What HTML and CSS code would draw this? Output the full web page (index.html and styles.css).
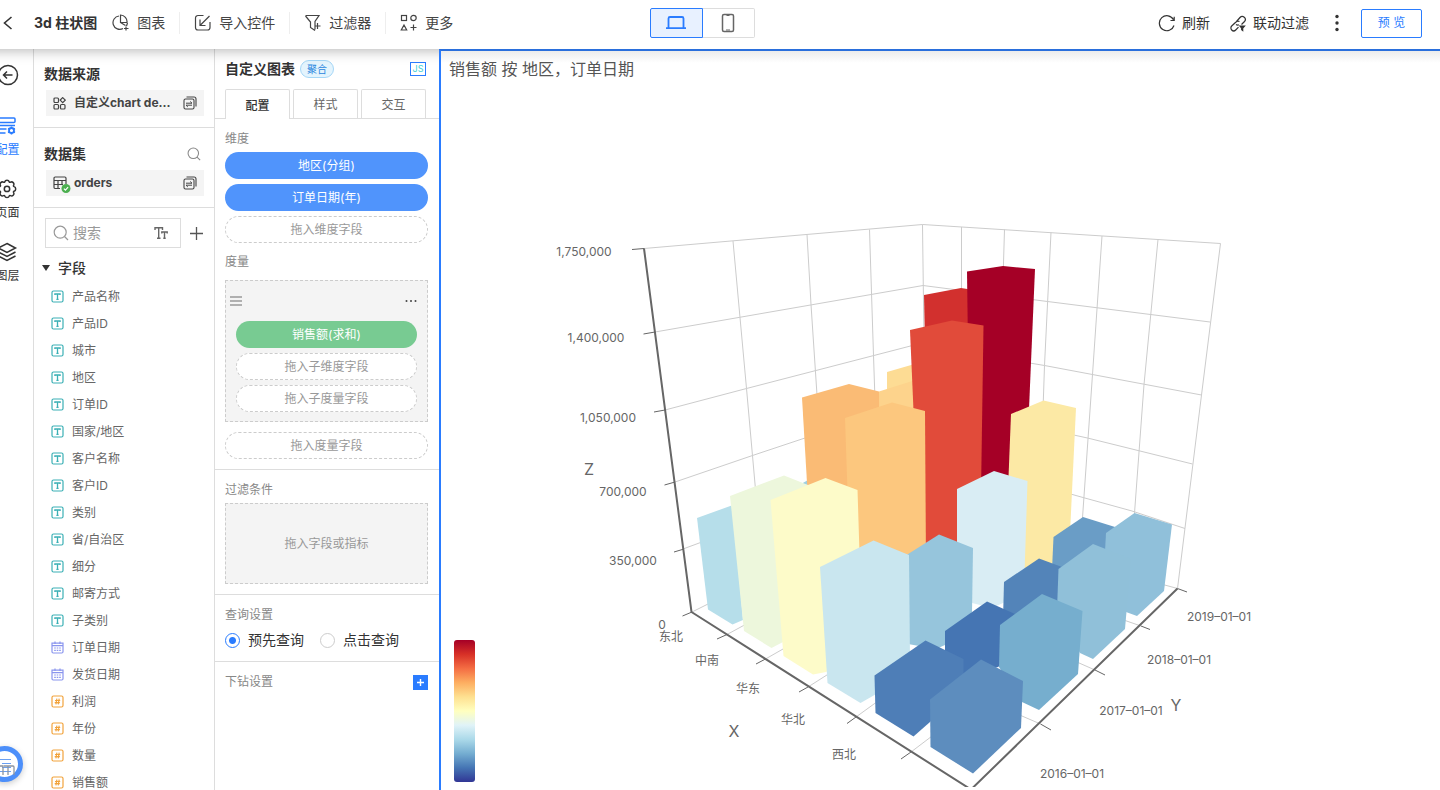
FILE: index.html
```html
<!DOCTYPE html>
<html lang="zh-CN">
<head>
<meta charset="utf-8">
<title>3d 柱状图</title>
<link rel="stylesheet" href="styles.css">
</head>
<body>
<svg class="sprite" aria-hidden="true">
  <symbol id="i-text" viewBox="0 0 13 13"><rect x="1" y="1" width="11" height="11" rx="1.5"/><path d="M3.9 5V4h5.2v1M6.5 4v5.4M5.4 9.4h2.2" stroke-width="1.3"/></symbol>
  <symbol id="i-date" viewBox="0 0 13 13"><path d="M1 2.2h11v8.6a1.2 1.2 0 0 1-1.2 1.2H2.200A1.200 1.200 0 0 1 1 10.800zM1 4.700h11M4 .5v2.500M9 .5v2.500"/><path d="M3.200 7h1.600M5.700 7h1.600M8.200 7h1.600M3.200 9.300h1.600M5.700 9.300h1.600M8.200 9.300h1.600"/></symbol>
  <symbol id="i-num" viewBox="0 0 13 13"><rect x="1" y="1" width="11" height="11" rx="1.5"/><path d="M5.900 3.700l-1 5.600M8.200 3.700l-1 5.600M4 5.500h5.200M3.700 7.600h5.200"/></symbol>
  <symbol id="i-swap" viewBox="0 0 14 14"><path d="M3.500 1h7.500A2 2 0 0 1 13 3v7.500" stroke-width="1.100"/><rect x="1" y="3" width="10" height="10" rx="1.500" stroke-width="1.100"/><path d="M3 7.200h6L7.200 5.500M9 9.200H3l1.800 1.700" stroke-width="1"/></symbol>
  <symbol id="i-search" viewBox="0 0 16 16"><circle cx="7.200" cy="7.200" r="6"/><path d="M11.500 11.500l3.500 3.500"/></symbol>
</svg>

<div class="app">
  <header class="topbar">
    <div class="topbar-left">
      <button class="back" aria-label="返回"><svg width="10" height="14" viewBox="0 0 10 14"><path d="M8.500 1L1.500 7l7 6" stroke-width="1.600"/></svg></button>
      <h1>3d 柱状图</h1>
      <nav class="tools">
        <button class="tool"><svg width="18" height="18" viewBox="0 0 18 18"><path d="M7 2a6.700 6.700 0 1 0 4 12.500M8.500 1v7.500H15A6.800 6.800 0 0 0 8.500 1zM8.500 8.500l5 3M15.500 9l-1 3M14 12.500v4M12 14.500h4.500"/></svg>图表</button>
        <button class="tool"><svg width="18" height="18" viewBox="0 0 18 18"><path d="M9.500 1.500H4A2.500 2.500 0 0 0 1.500 4v9.500A2.500 2.500 0 0 0 4 16h9.500a2.500 2.500 0 0 0 2.500-2.500V8M15.500 2L6.500 11M6 5.500V11.500h5.500"/></svg>导入控件</button>
        <button class="tool"><svg width="18" height="18" viewBox="0 0 18 18"><path d="M1.500 1.500h13.500l-4 6v8M1.500 2l5 6v5.500l4.500 3M13.500 9v6M10.500 12h6"/></svg>过滤器</button>
        <button class="tool"><svg width="18" height="18" viewBox="0 0 18 18"><rect x="1.500" y="1.500" width="5" height="5"/><circle cx="13.500" cy="4" r="2.700"/><path d="M4 11l2.700 5H1.300zM13.500 10.500v6M10.500 13.500h6"/></svg>更多</button>
      </nav>
    </div>
    <div class="device">
      <button class="on" aria-label="电脑"><svg width="22" height="16" viewBox="0 0 22 16"><path d="M3.500 12.500V3.500a1.500 1.500 0 0 1 1.500-1.500h12a1.500 1.500 0 0 1 1.500 1.500v9M1 13.200h20" stroke-width="1.800"/></svg></button>
      <button aria-label="手机"><svg width="14" height="20" viewBox="0 0 14 20"><rect x="1.500" y="1.500" width="11" height="17" rx="1.500" stroke-width="1.500"/><path d="M5.500 2.500h3M5 17h4"/></svg></button>
    </div>
    <div class="topbar-right">
      <button class="action"><svg width="18" height="18" viewBox="0 0 18 18"><path d="M15.500 5.700A7.500 7.500 0 1 0 16 11.500M16.200 2.800v3.700h-3.700"/></svg>刷新</button>
      <button class="action"><svg width="18" height="18" viewBox="0 0 18 18"><path d="M7.500 7.500L11 3.500a3 3 0 0 1 4.500 4L12.500 10.500M10.500 7.500a3 3 0 0 0-3.800.8L2.700 12a2.800 2.800 0 0 0 4 4L9.500 13.200M7 10.500a3 3 0 0 0 3 .2"/><path d="M11 12h4.500L13.700 14v2.500l-1-.8V14z" fill="currentColor"/></svg>联动过滤</button>
      <button class="kebab" aria-label="更多操作"><svg width="6" height="18" viewBox="0 0 6 18"><g fill="currentColor" stroke="none"><circle cx="3" cy="2.500" r="1.700"/><circle cx="3" cy="9" r="1.700"/><circle cx="3" cy="15.500" r="1.700"/></g></svg></button>
      <button class="preview">预 览</button>
    </div>
  </header>

  <div class="workspace">
    <nav class="rail">
      <button class="collapse" aria-label="收起"><svg width="22" height="22" viewBox="0 0 22 22"><circle cx="11" cy="11" r="9.500" stroke-width="1.500"/><path d="M15.500 11H6.500M10 7.500L6.500 11l3.500 3.500" stroke-width="1.500"/></svg></button>
      <button class="rail-item active"><svg width="22" height="22" viewBox="0 0 22 22"><rect x="1.500" y="3" width="17.500" height="4.500" rx="1" stroke-width="1.500"/><path d="M19 10.500H1.500v3.500h9M1.500 18h8" stroke-width="1.500"/><circle cx="15.500" cy="15.500" r="2.500" stroke-width="1.800"/><path d="M15.500 11.500v1.500M15.500 18v1.500M12 13.500l1.300.7M17.700 16.800l1.300.7M12 17.500l1.300-.7M17.700 14.200l1.300-.7" stroke-width="1.500"/></svg>配置</button>
      <button class="rail-item"><svg width="22" height="22" viewBox="0 0 22 22"><path d="M8.800 3.800Q9.200 2.300 11 2.300t2.200 1.500q.4.800 1.300.4 1.500-.8 2.700.4t.4 2.700q-.4.900.5 1.300 1.600.5 1.600 2.300t-1.600 2.300q-.9.400-.5 1.300.8 1.500-.4 2.700t-2.700.4q-.9-.4-1.300.5-.4 1.500-2.200 1.500t-2.200-1.500q-.4-.9-1.300-.5-1.500.8-2.700-.4t-.4-2.700q.4-.9-.5-1.300-1.600-.500-1.600-2.300t1.600-2.300q.9-.4.5-1.300-.8-1.500.4-2.700t2.700-.4q.9.400 1.300-.4z" stroke-width="1.500"/><circle cx="11" cy="10.900" r="2.700" stroke-width="1.500"/></svg>页面</button>
      <button class="rail-item"><svg width="22" height="22" viewBox="0 0 22 22"><path d="M11 2.500l8.500 4.500L11 11.500 2.500 7zM2.500 11l8.500 4.500L19.500 11M2.500 15l8.500 4.500L19.500 15" stroke-width="1.500"/></svg>图层</button>
      <button class="help" aria-label="帮助"><svg width="28" height="28" viewBox="0 0 28 28"><path d="M7 8.500h13M11 12.500h9M11 16.500h9M7 20.500h13" stroke="#6aa0f2"/><path d="M6 15h6v9M13 15h9a1 1 0 0 1 1 1v8M17 15v9" stroke="#8d949e" stroke-width="1.300"/></svg></button>
    </nav>

    <aside class="data">
      <section class="block">
        <h2>数据来源</h2>
        <button class="source"><svg width="13" height="13" viewBox="0 0 13 13"><rect x="1" y="1" width="4.500" height="4.500" rx="1"/><path d="M9.700.6l2.500 2.500-2.500 2.500-2.500-2.500z"/><rect x="1" y="7.500" width="4.500" height="4.500" rx="1"/><rect x="7.500" y="7.500" width="4.500" height="4.500" rx="1"/></svg><span>自定义chart de...</span><svg width="14" height="14"><use href="#i-swap"/></svg></button>
      </section>
      <section class="block">
        <div class="row"><h2>数据集</h2><button class="mini" aria-label="搜索数据集"><svg width="14" height="14"><use href="#i-search"/></svg></button></div>
        <button class="source"><svg class="sheet" width="18" height="18" viewBox="0 0 18 18"><path d="M7 12.500H2A1.200 1.200 0 0 1 1 11.300V2.200A1.200 1.200 0 0 1 2.200 1h9.600A1.200 1.200 0 0 1 13 2.200V8M1 4.500h12M1 8.500h9M5 4.500v8M9 4.500V9"/><circle cx="13" cy="12.500" r="4.500" fill="#4caf50" stroke="none"/><path d="M10.900 12.600l1.500 1.500 2.700-2.900" stroke="#fff"/></svg><span>orders</span><svg width="14" height="14"><use href="#i-swap"/></svg></button>
      </section>
      <div class="finder">
        <label class="search"><svg width="16" height="16"><use href="#i-search"/></svg><input type="text" placeholder="搜索" aria-label="搜索"><svg class="tt" width="14" height="14" viewBox="0 0 14 14"><path d="M1 4V1.700h7.500V4M4.700 1.700v10.600M3 12.300h3.500M7.800 7.500V6h5.400v1.500M10.500 6v6.300M9.300 12.300h2.400" stroke-width="1.400"/></svg></label>
        <button class="mini" aria-label="添加"><svg width="15" height="15" viewBox="0 0 15 15"><path d="M7.500 1v13M1 7.500h13" stroke-width="1.300"/></svg></button>
      </div>
      <details open>
        <summary><i></i>字段</summary>
        <ul class="fields">
          <li class="t"><svg><use href="#i-text"/></svg>产品名称</li>
          <li class="t"><svg><use href="#i-text"/></svg>产品ID</li>
          <li class="t"><svg><use href="#i-text"/></svg>城市</li>
          <li class="t"><svg><use href="#i-text"/></svg>地区</li>
          <li class="t"><svg><use href="#i-text"/></svg>订单ID</li>
          <li class="t"><svg><use href="#i-text"/></svg>国家/地区</li>
          <li class="t"><svg><use href="#i-text"/></svg>客户名称</li>
          <li class="t"><svg><use href="#i-text"/></svg>客户ID</li>
          <li class="t"><svg><use href="#i-text"/></svg>类别</li>
          <li class="t"><svg><use href="#i-text"/></svg>省/自治区</li>
          <li class="t"><svg><use href="#i-text"/></svg>细分</li>
          <li class="t"><svg><use href="#i-text"/></svg>邮寄方式</li>
          <li class="t"><svg><use href="#i-text"/></svg>子类别</li>
          <li class="d"><svg><use href="#i-date"/></svg>订单日期</li>
          <li class="d"><svg><use href="#i-date"/></svg>发货日期</li>
          <li class="n"><svg><use href="#i-num"/></svg>利润</li>
          <li class="n"><svg><use href="#i-num"/></svg>年份</li>
          <li class="n"><svg><use href="#i-num"/></svg>数量</li>
          <li class="n"><svg><use href="#i-num"/></svg>销售额</li>
        </ul>
      </details>
    </aside>

    <aside class="config">
      <div class="config-head"><h2>自定义图表</h2><span class="badge">聚合</span><button class="js">JS</button></div>
      <div class="tabs"><button class="on">配置</button><button>样式</button><button>交互</button></div>
      <section class="group first">
        <h3>维度</h3>
        <div class="pills">
          <button class="pill blue">地区(分组)</button>
          <button class="pill blue">订单日期(年)</button>
          <div class="pill drop">拖入维度字段</div>
        </div>
        <h3 class="second">度量</h3>
        <div class="measure">
          <div class="measure-head">
            <svg width="12" height="10" viewBox="0 0 12 10"><path d="M0 1h12M0 5h12M0 9h12" stroke="#999" stroke-width="1.500"/></svg>
            <button aria-label="设置"><svg width="12" height="4" viewBox="0 0 12 4"><g fill="#444" stroke="none"><circle cx="1.500" cy="2" r="1"/><circle cx="6" cy="2" r="1"/><circle cx="10.500" cy="2" r="1"/></g></svg></button>
          </div>
          <div class="pills">
            <button class="pill green">销售额(求和)</button>
            <div class="pill drop">拖入子维度字段</div>
            <div class="pill drop">拖入子度量字段</div>
          </div>
        </div>
        <div class="pill drop">拖入度量字段</div>
      </section>
      <section class="group">
        <h3>过滤条件</h3>
        <div class="filter-drop">拖入字段或指标</div>
      </section>
      <section class="group">
        <h3>查询设置</h3>
        <div class="radios">
          <label><input type="radio" name="query" checked>预先查询</label>
          <label><input type="radio" name="query">点击查询</label>
        </div>
      </section>
      <section class="group last">
        <h3>下钻设置</h3>
        <button class="add" aria-label="添加下钻"><svg width="9" height="9" viewBox="0 0 9 9"><path d="M4.500 1v7M1 4.500h7" stroke="#fff" stroke-width="1.400"/></svg></button>
      </section>
    </aside>

    <main class="canvas">
      <h2>销售额 按 地区，订单日期</h2>
      <svg class="chart" viewBox="441 87 999 700" role="img" aria-label="3d 柱状图">
        <defs><linearGradient id="scale" x1="0" y1="0" x2="0" y2="1">
          <stop offset="0" stop-color="#a50026"/><stop offset=".1" stop-color="#d73027"/><stop offset=".2" stop-color="#f46d43"/><stop offset=".3" stop-color="#fdae61"/><stop offset=".4" stop-color="#fee090"/><stop offset=".5" stop-color="#ffffbf"/><stop offset=".6" stop-color="#e0f3f8"/><stop offset=".7" stop-color="#abd9e9"/><stop offset=".8" stop-color="#74add1"/><stop offset=".9" stop-color="#4575b4"/><stop offset="1" stop-color="#313695"/>
        </linearGradient></defs>
        <g class="grid">
          <path d="M644 248.500L922.500 224.500 1220.500 243.500"/>
          <path d="M655 332L923 285.500 1047.500 301.500 1210 322"/>
          <path d="M665 410L746.500 388.500 924 342.500M1000 358L1044.500 365.500 1201.500 395"/>
          <path d="M675 482L752.500 455.500 820 433M1060 432L1087.500 438 1192.500 464"/>
          <path d="M683 549L710 539M1060 491L1083 497.500 1132 511 1185 528.500M692 612L720 598M1150 581L1177.500 588.500"/>
          <path d="M733 241L746.500 388.500 756 495M807 234.500L811 304.500 818 410M869.500 229.500L873.500 355.500 875 400M922.500 224.500L924 342"/>
          <path d="M961.500 227V300M1004.500 229.500L1003 280M1051 232.500L1044.500 365.500 1043 410M1102 236L1092.500 374.500 1082 525M1158 239.500L1144 384.500 1134 520M1220.500 243.500L1201.500 395 1177.500 588.500"/>
          <path d="M727 634.500L750 622M765.500 659L790 645M808 687L830 673M856 717L885 696M911 752L940 730M1040.500 724L1015 713M1095 670L1070 659M1141 626L1115 617"/>
        </g>
        <g class="bars">
          <path fill="#9dcfe2" d="M796 487L808 480V495z"/>
          <path fill="#fddc94" d="M887 372L925 361V420H887z"/>
          <path fill="#fdd38c" d="M879 391.500L925 377V430H879z"/>
          <path fill="#d2302e" d="M924 295L961 288 980 291V345H925z"/>
          <path fill="#a50026" d="M967 271.500L1003 266 1035 269 1029 409 1020 500H970z"/>
          <path fill="#fabb75" d="M802 397.500L849 384 879 391.500 880 500H808z"/>
          <path fill="#e14b3a" d="M910 330L952 320.500 983.500 325.500 980 560H920z"/>
          <path fill="#fce9a5" d="M1011 414L1043.500 400.500 1076 408 1068 575H1022L1008 490z"/>
          <path fill="#fcc77e" d="M845 418L892 402.500 925 411 926 565H850z"/>
          <path fill="#b6deea" d="M697 518L733 505 743 620 732.500 624.500 708 609.500z"/>
          <path fill="#edf7dc" d="M730 496L784 475.500 808 485 812 600 783 642 771.500 648 744 631z"/>
          <path fill="#fdfbc9" d="M770.500 500L825.500 478 857.500 490 861 600V650L826 672 813 674.500 783.500 656z"/>
          <path fill="#d9edf4" d="M957 489L994 471 1027.500 481 1024 590 1003 603 992 608 972 603 957 580z"/>
          <path fill="#96c5dc" d="M905 556L939 534.500 973 548 972 612 945 645 936 649 908 644z"/>
          <path fill="#c9e6ef" d="M820 567L873.500 540.500 909 555 910 660 878 693 860.500 703 827.500 683z"/>
          <path fill="#6a9dc6" d="M1053.500 537L1083 517 1115 527 1110 570H1052z"/>
          <path fill="#90c0da" d="M1106 533L1134.500 513 1172 524.500 1164 591 1137 616 1126 612 1104 570z"/>
          <path fill="#5384b9" d="M1004 582L1039 558.500 1062 567V610L1003 620z"/>
          <path fill="#90c0d9" d="M1058.500 569L1093 544 1131 559 1125 629 1093 659 1080 653 1057 610z"/>
          <path fill="#4575b3" d="M945 631L987 601.500 1015 614 1005 662 998 667 965 675 945 665z"/>
          <path fill="#76aece" d="M1000 625L1042 594 1082.500 611 1078 674 1039 710 1022 702 999 667z"/>
          <path fill="#4e7eb7" d="M874.500 675.500L925.500 640.500 963.500 659V690L930 722 913.500 736.500 875.500 713z"/>
          <path fill="#5d8dbe" d="M930 699.500L981 659.500 1023 681 1021 728 973 773.500 930.500 747z"/>
        </g>
        <g class="axis">
          <path d="M644 248.500L691.500 612 971 789.500 1177.500 588.500"/>
          <path class="ticks" d="M632 249.500L644 248.500M643.500 334L655 332M654 412L665 410M664.500 485L675 482M674 552L684 549M682.500 616L692 612M717 639L727 634.500M756 664L765.500 659M799 692L808 687M847 723.500L856 717M901 759L911 752M1177.500 588.500L1187 592M1141 626L1150 629.500M1095 670L1105 675M1040.500 724L1051 730"/>
        </g>
        <g class="labels">
          <text x="584" y="256">1,750,000</text><text x="596" y="342">1,400,000</text><text x="608" y="422">1,050,000</text><text x="623" y="496">700,000</text><text x="633" y="565">350,000</text><text x="662" y="629">0</text>
          <text x="671" y="641">东北</text><text x="707" y="665">中南</text><text x="748" y="693">华东</text><text x="793" y="724">华北</text><text x="844" y="759">西北</text>
          <text x="1219" y="621">2019–01–01</text><text x="1179" y="664">2018–01–01</text><text x="1131" y="715">2017–01–01</text><text x="1072" y="778">2016–01–01</text>
          <g class="names"><text x="589" y="475">Z</text><text x="734" y="737">X</text><text x="1176" y="711">Y</text></g>
        </g>
        <rect x="454" y="640" width="21" height="142" rx="3" fill="url(#scale)"/>
      </svg>
    </main>
  </div>
</div>
</body>
</html>
```
FILE: styles.css
```css
* { box-sizing: border-box; }
body {
  margin: 0;
  overflow: hidden;
  background: #fff;
  color: #333;
  font: 12px/18px Inter, "Noto Sans CJK SC", sans-serif;
}
h1, h2, h3, ul { margin: 0; padding: 0; }
button { border: 0; padding: 0; background: none; color: inherit; font: inherit; cursor: pointer; }
svg { flex: none; fill: none; stroke: currentColor; stroke-width: 1.2px; }
.sprite { display: none; }

.app { display: flex; flex-direction: column; height: 100vh; margin-left: -18px; }

/* top bar */
.topbar {
  position: relative;
  z-index: 2;
  display: flex;
  align-items: center;
  flex: none;
  height: 49px;
  padding: 0 18px 3px 0;
  background: #fff;
  box-shadow: 0 2px 12px rgba(0, 0, 0, .28);
  font-size: 14px;
  line-height: 20px;
}
.topbar-left, .topbar-right { display: flex; align-items: center; flex: 1 1 0; white-space: nowrap; }
.topbar-right { justify-content: flex-end; }
.back { display: flex; margin: 0 21px; }
h1 { font-size: 14px; font-weight: 700; }
.tools { display: flex; margin-left: 1px; color: #444; }
.tool { display: flex; align-items: center; gap: 7px; height: 22px; padding: 0 14px; border-right: 1px solid #eee; }
.tool:last-child { border: 0; }
.device { display: flex; }
.device button { display: grid; place-items: center; width: 52px; height: 30px; border: 1px solid #ddd; border-left: 0; border-radius: 0 2px 2px 0; color: #666; }
.device .on { width: 53px; border: 1px solid #2a7cff; border-radius: 2px 0 0 2px; background: #e8f1ff; color: #2a7cff; }
.action { display: flex; align-items: center; gap: 6px; margin-right: 19px; }
.kebab { display: flex; margin: 0 21px 0 6px; }
.preview { width: 61px; height: 29px; border: 1px solid #2a7cff; border-radius: 2px; color: #2a7cff; font-size: 12px; line-height: 20px; }

.workspace { display: flex; flex: 1; min-height: 0; }

/* icon rail */
.rail { position: relative; display: flex; flex-direction: column; align-items: center; gap: 19px; flex: none; width: 52px; padding-top: 15px; border-right: 1px solid #ddd; }
.collapse { display: flex; margin-bottom: 10px; }
.rail-item { display: flex; flex-direction: column; align-items: center; gap: 4px; white-space: nowrap; }
.rail-item.active { color: #2a7cff; }
.help {
  position: absolute;
  left: 4px;
  bottom: 8px;
  display: grid;
  place-items: center;
  width: 37px;
  height: 36px;
  border: 5px solid #4c8ffa;
  border-radius: 50%;
  background: #fff;
  box-shadow: 0 2px 6px rgba(0, 0, 0, .2);
}

/* data panel */
.data { flex: none; width: 181px; border-right: 1px solid #ddd; overflow: hidden; }
.block { padding: 14px 10px 11px; border-bottom: 1px solid #ddd; }
.block h2, .config-head h2 { font-size: 14px; line-height: 22px; font-weight: 700; }
.block + .block { padding-top: 15px; }
.row { display: flex; align-items: center; justify-content: space-between; }
.mini { display: flex; color: #888; padding-right: 3px; }
.source { display: flex; align-items: center; gap: 8px; width: 158px; height: 26px; margin: 5px 0 0 2px; padding: 0 7px; background: #f4f4f4; color: #444; font-weight: 700; }
.source span { flex: 1; text-align: left; white-space: nowrap; }
.source .sheet { margin: 3px -5px 0 0; }
.finder { display: flex; align-items: center; gap: 8px; padding: 10px 10px 9px 11px; }
.search { display: flex; align-items: center; flex: 1; min-width: 0; gap: 4px; height: 30px; padding: 0 12px 0 7px; border: 1px solid #ddd; color: #999; }
.search input { flex: 1; min-width: 0; width: 0; padding: 0; border: 0; outline: 0; background: none; font: inherit; font-size: 14px; }
.search input::placeholder { color: #999; }
.tt { color: #666; }
.finder .mini { color: #555; padding: 0; }
summary { display: flex; align-items: center; gap: 8px; padding-left: 8px; font-size: 14px; line-height: 22px; font-weight: 500; cursor: pointer; list-style: none; }
summary i { border: 4px solid transparent; border-top: 6px solid #333; border-bottom: 0; }
.fields { padding: 4px 0 0 17px; list-style: none; }
.fields li { display: flex; align-items: center; gap: 8px; height: 27px; color: #666; }
.fields svg { width: 13px; height: 13px; }
.t svg { color: #3bb0b5; }
.d svg { color: #8a95ee; }
.n svg { color: #f2a33c; }

/* configuration panel */
.config { flex: none; width: 224px; overflow: hidden; }
.config-head { display: flex; align-items: center; padding: 9px 13px 9px 10px; }
.badge { margin-left: 5px; padding: 0 6px; border: 1px solid #a5d7f7; border-radius: 9px; background: #e4f4fd; color: #2a86dd; font-size: 10px; line-height: 16px; }
.js { width: 16px; height: 14px; margin-left: auto; border: 1px solid #2a7cff; color: #3fd0d8; font-size: 9px; line-height: 12px; }
.tabs { display: flex; gap: 3px; padding: 0 10px; border-bottom: 1px solid #ddd; }
.tabs button { width: 65px; height: 29px; padding-top: 2px; border: 1px solid #ddd; border-bottom: 0; border-radius: 2px 2px 0 0; color: #666; }
.tabs .on { margin-bottom: -1px; height: 30px; background: #fff; color: #333; font-weight: 500; }
.group { padding: 11px 11px 10px 10px; border-bottom: 1px solid #ddd; }
h3 { color: #888; font-size: 12px; line-height: 18px; font-weight: 400; }
.pills { display: flex; flex-direction: column; gap: 5px; }
.pill { display: grid; place-items: center; width: 100%; height: 27px; border-radius: 14px; }
.blue { background: #5094fc; color: #fff; }
.green { background: #78cb92; color: #fff; }
.drop { border: 1px dashed #ccc; background: #fff; color: #999; }
.first h3 { margin-bottom: 4px; }
.first .second { margin: 10px 0 9px; }
.measure { margin-bottom: 10px; padding: 10px 10px 9px; border: 1px dashed #ccc; background: #f4f4f4; }
.measure-head { display: flex; align-items: center; justify-content: space-between; height: 20px; margin: 0 0 10px -6px; }
.measure-head button { display: flex; }
.filter-drop { display: grid; place-items: center; height: 81px; margin-top: 4px; border: 1px dashed #ccc; background: #f4f4f4; color: #999; }
.radios { display: flex; gap: 16px; margin: 5px 0 0; font-size: 14px; line-height: 22px; }
.radios label { display: flex; align-items: center; gap: 8px; }
.radios input { appearance: none; width: 15px; height: 15px; margin: 0; border: 1px solid #ccc; border-radius: 50%; }
.radios input:checked { border-color: #2a7cff; background: radial-gradient(circle, #2a7cff 3px, transparent 4px); }
.last { display: flex; align-items: center; justify-content: space-between; border: 0; }
.add { display: grid; place-items: center; width: 15px; height: 15px; background: #2a7cff; }

/* chart canvas */
.canvas { position: relative; z-index: 3; flex: 1; min-width: 0; border: solid #2a7cff; border-width: 2px 0 0 2px; border-top-color: #2a6fdc; overflow: hidden; }
.canvas h2 {
  padding: 6px 8px;
  background: linear-gradient(#ececec, #fff 12px);
  color: #555;
  font-size: 16px;
  line-height: 24px;
  font-weight: 400;
}
.chart { display: block; width: 100%; }
.grid { stroke: #ccc; stroke-width: 1px; }
.bars { stroke: none; }
.axis { stroke: #666; stroke-width: 2px; }
.ticks { stroke-width: 1px; }
.labels { fill: #666; stroke: none; font-size: 12px; text-anchor: middle; }
.names { font-size: 16px; }
.chart rect { stroke: none; }
```
